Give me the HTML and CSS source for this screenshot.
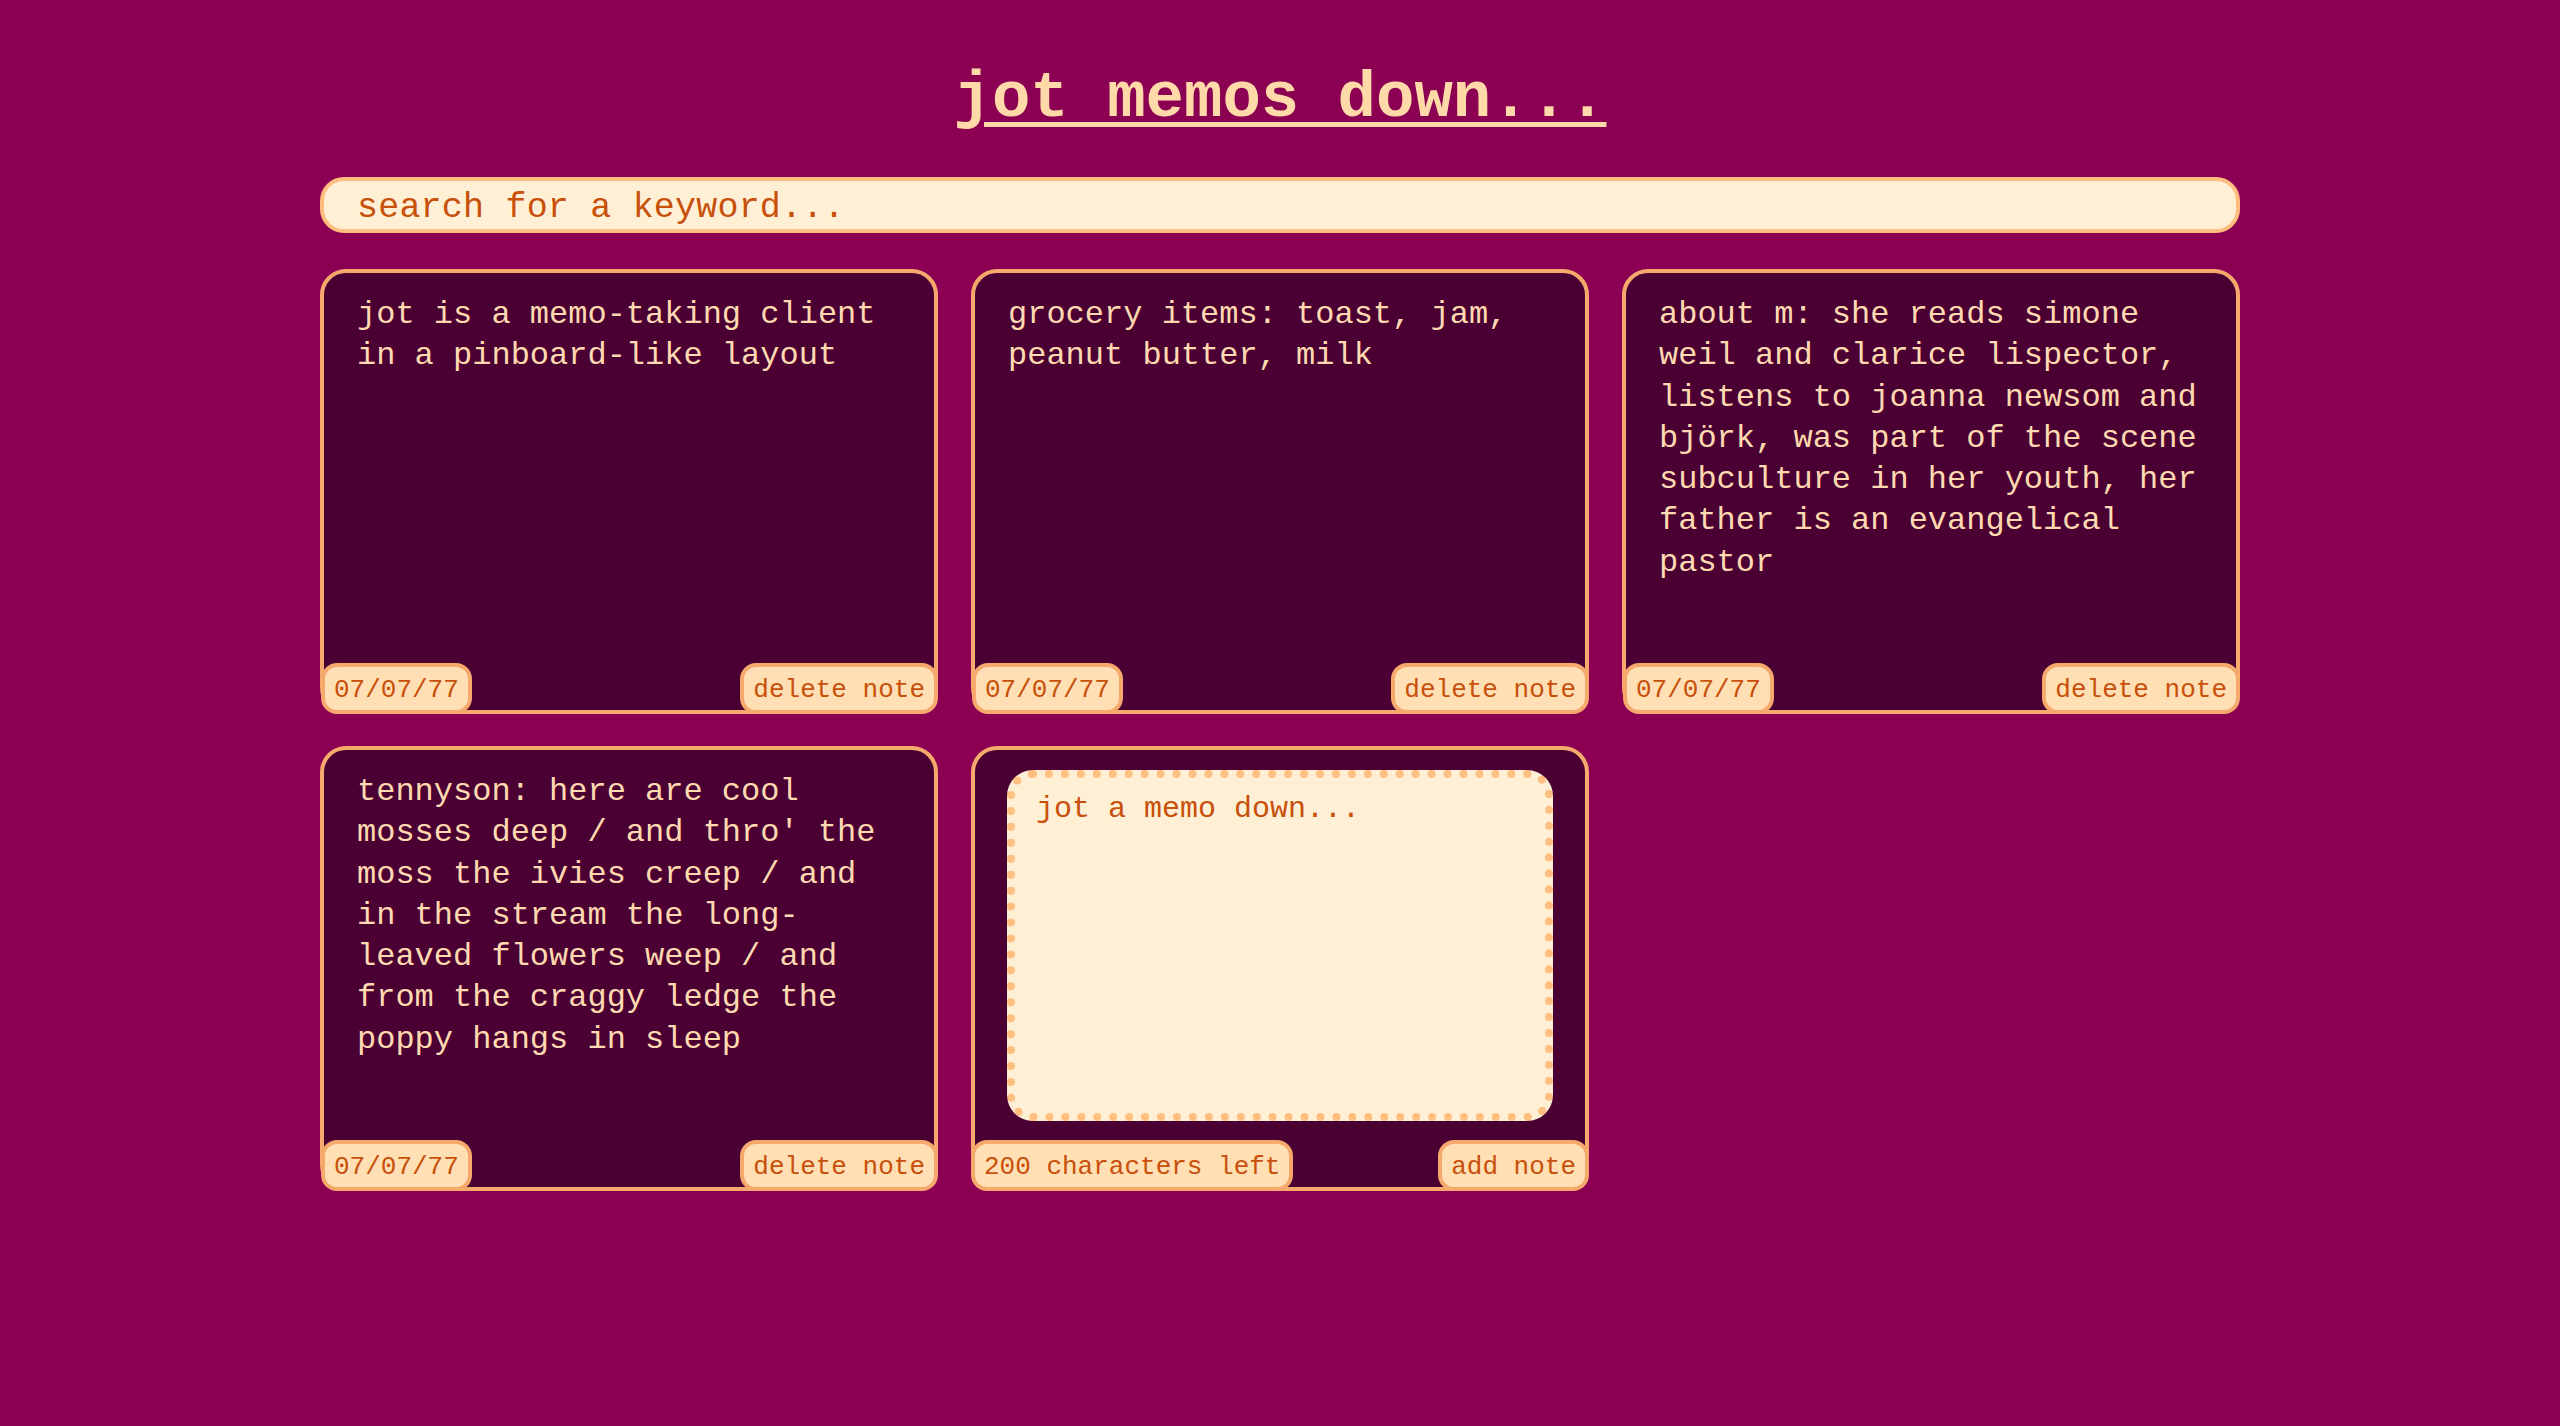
FILE: index.html
```html
<!DOCTYPE html>
<html lang="en">
<head>
<meta charset="utf-8">
<title>jot</title>
<link rel="stylesheet" href="styles.css">
</head>
<body>
<main class="app">
  <h1 class="title">jot memos down...</h1>
  <input class="search" type="text" placeholder="search for a keyword...">
  <section class="board">
    <article class="note">
      <p class="note-text">jot is a memo-taking client in a pinboard-like layout</p>
      <div class="note-footer">
        <span class="badge">07/07/77</span>
        <button class="badge">delete note</button>
      </div>
    </article>
    <article class="note">
      <p class="note-text">grocery items: toast, jam, peanut butter, milk</p>
      <div class="note-footer">
        <span class="badge">07/07/77</span>
        <button class="badge">delete note</button>
      </div>
    </article>
    <article class="note">
      <p class="note-text">about m: she reads simone weil and clarice lispector, listens to joanna newsom and björk, was part of the scene subculture in her youth, her father is an evangelical pastor</p>
      <div class="note-footer">
        <span class="badge">07/07/77</span>
        <button class="badge">delete note</button>
      </div>
    </article>
    <article class="note">
      <p class="note-text">tennyson: here are cool mosses deep / and thro' the moss the ivies creep / and in the stream the long-leaved flowers weep / and from the craggy ledge the poppy hangs in sleep</p>
      <div class="note-footer">
        <span class="badge">07/07/77</span>
        <button class="badge">delete note</button>
      </div>
    </article>
    <article class="note note-new">
      <textarea class="memo-input" placeholder="jot a memo down..."></textarea>
      <div class="note-footer">
        <span class="badge">200 characters left</span>
        <button class="badge">add note</button>
      </div>
    </article>
  </section>
</main>
</body>
</html>
```
FILE: styles.css
```css
html, body {
  margin: 0;
  padding: 0;
}
body {
  background: #8b0052;
  font-family: "Liberation Mono", monospace;
  min-height: 1426px;
}
.app {
  width: 1920px;
  margin: 0 auto;
  padding-top: 61px;
  display: flex;
  flex-direction: column;
}
.title {
  margin: 0;
  text-align: center;
  font-size: 64px;
  line-height: 77px;
  font-weight: bold;
  color: #ffd9a8;
  text-decoration: underline;
  text-decoration-thickness: 5px;
  text-underline-offset: 6px;
}
.search {
  margin-top: 39px;
  box-sizing: border-box;
  height: 56px;
  width: 100%;
  border: 4px solid #ffbe80;
  border-radius: 24px;
  background: #ffefd5;
  padding: 5px 33px 0;
  font-family: "Liberation Mono", monospace;
  font-size: 35px;
  letter-spacing: 0.2px;
  color: #c8500a;
  outline: none;
}
.search::placeholder {
  color: #c8500a;
  opacity: 1;
}
.board {
  margin-top: 36px;
  display: grid;
  grid-template-columns: repeat(3, 618px);
  grid-auto-rows: 445px;
  column-gap: 33px;
  row-gap: 32px;
}
.note {
  box-sizing: border-box;
  border: 4px solid #f5a96c;
  border-radius: 26px;
  background: #4b0033;
  display: flex;
  flex-direction: column;
  padding: 21px 32px 0 33px;
}
.note-text {
  margin: 0;
  font-size: 32px;
  line-height: 41.3px;
  color: #ffdab0;
  overflow-wrap: break-word;
}
.note-footer {
  margin: auto -36px -4px -36px;
  display: flex;
  justify-content: space-between;
  align-items: flex-end;
}
.badge {
  box-sizing: border-box;
  height: 51px;
  display: flex;
  align-items: center;
  border: 4px solid #f5a96c;
  border-radius: 16px;
  background: #ffdfb3;
  padding: 2px 9px 0;
  font-family: "Liberation Mono", monospace;
  font-size: 26px;
  color: #c8500a;
  white-space: nowrap;
}
button.badge {
  cursor: pointer;
}
.note-new {
  padding: 20px 32px 0 32px;
}
.memo-input {
  flex: 1;
  box-sizing: border-box;
  width: 100%;
  min-height: 0;
  resize: none;
  border: 8px dotted #ffbf80;
  border-radius: 26px;
  background: #ffefd5;
  padding: 14px 21px;
  font-family: "Liberation Mono", monospace;
  font-size: 30px;
  color: #c8500a;
  outline: none;
}
.memo-input::placeholder {
  color: #c8500a;
  opacity: 1;
}
.note-new .note-footer {
  margin-top: 19px;
}
```
